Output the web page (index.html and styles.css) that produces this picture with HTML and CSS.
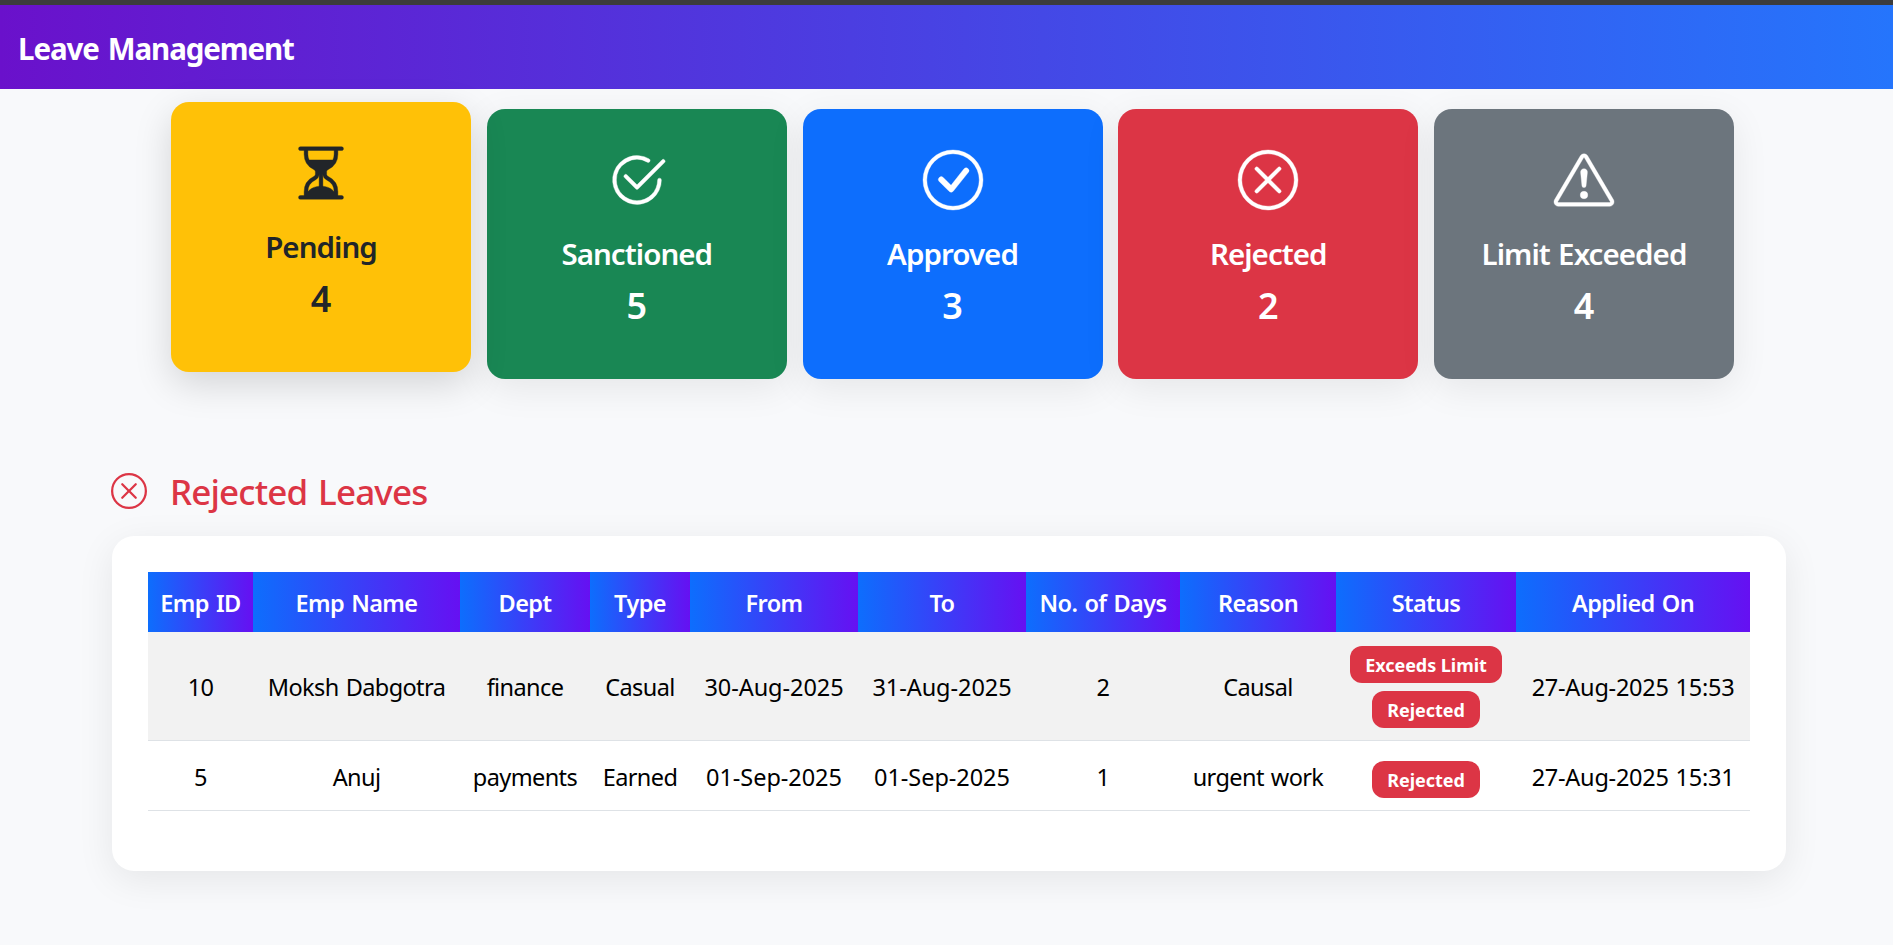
FILE: index.html
```html
<!DOCTYPE html>
<html lang="en">
<head>
<meta charset="utf-8">
<title>Leave Management</title>
<link rel="stylesheet" href="styles.css">
</head>
<body>
<header class="topbar"><h1 class="brand">Leave Management</h1></header>
<main>
<section class="cards">
  <div class="card pending">
    <svg class="card-icon" viewBox="0 0 16 16"><path d="M2.5 15a.5.5 0 1 1 0-1h1v-1a4.5 4.5 0 0 1 2.557-4.06c.29-.139.443-.377.443-.59v-.7c0-.213-.154-.451-.443-.59A4.5 4.5 0 0 1 3.5 3V2h-1a.5.5 0 0 1 0-1h11a.5.5 0 0 1 0 1h-1v1a4.5 4.5 0 0 1-2.557 4.06c-.29.139-.443.377-.443.59v.7c0 .213.154.451.443.59A4.5 4.5 0 0 1 12.5 13v1h1a.5.5 0 0 1 0 1zm2-13v1c0 .537.12 1.045.337 1.5h6.326c.216-.455.337-.963.337-1.5V2zm3 6.35c0 .701-.478 1.236-1.011 1.492A3.5 3.5 0 0 0 4.5 13s.866-1.299 3-1.48zm1 0v3.17c2.134.181 3 1.48 3 1.48a3.5 3.5 0 0 0-1.989-3.158C8.978 9.586 8.5 9.052 8.5 8.351z"/></svg>
    <h5 class="card-label">Pending</h5><div class="card-count">4</div>
  </div>
  <div class="card sanctioned">
    <svg class="card-icon" viewBox="0 0 16 16"><path d="M2.5 8a5.5 5.5 0 0 1 8.25-4.764.5.5 0 0 0 .5-.866A6.5 6.5 0 1 0 14.5 8a.5.5 0 0 0-1 0 5.5 5.5 0 1 1-11 0"/><path d="M15.354 3.354a.5.5 0 0 0-.708-.708L8 9.293 5.354 6.646a.5.5 0 1 0-.708.708l3 3a.5.5 0 0 0 .708 0z"/></svg>
    <h5 class="card-label">Sanctioned</h5><div class="card-count">5</div>
  </div>
  <div class="card approved">
    <svg class="card-icon" viewBox="0 0 16 16"><path d="M8 15A7 7 0 1 1 8 1a7 7 0 0 1 0 14m0 1A8 8 0 1 0 8 0a8 8 0 0 0 0 16"/><path d="m10.97 4.97-.02.022-3.473 4.425-2.093-2.094a.75.75 0 0 0-1.06 1.06L6.97 11.03a.75.75 0 0 0 1.079-.02l3.992-4.99a.75.75 0 0 0-1.071-1.05"/></svg>
    <h5 class="card-label">Approved</h5><div class="card-count">3</div>
  </div>
  <div class="card rejected">
    <svg class="card-icon" viewBox="0 0 16 16"><path d="M8 15A7 7 0 1 1 8 1a7 7 0 0 1 0 14m0 1A8 8 0 1 0 8 0a8 8 0 0 0 0 16"/><path d="M4.646 4.646a.5.5 0 0 1 .708 0L8 7.293l2.646-2.647a.5.5 0 0 1 .708.708L8.707 8l2.647 2.646a.5.5 0 0 1-.708.708L8 8.707l-2.646 2.647a.5.5 0 0 1-.708-.708L7.293 8 4.646 5.354a.5.5 0 0 1 0-.708"/></svg>
    <h5 class="card-label">Rejected</h5><div class="card-count">2</div>
  </div>
  <div class="card exceeded">
    <svg class="card-icon" viewBox="0 0 16 16"><path d="M7.938 2.016A.13.13 0 0 1 8.002 2a.13.13 0 0 1 .063.016.15.15 0 0 1 .054.057l6.857 11.667c.036.06.035.124.002.183a.2.2 0 0 1-.054.06.1.1 0 0 1-.066.017H1.146a.1.1 0 0 1-.066-.017.2.2 0 0 1-.054-.06.18.18 0 0 1 .002-.183L7.884 2.073a.15.15 0 0 1 .054-.057m1.044-.45a1.13 1.13 0 0 0-1.96 0L.165 13.233c-.457.778.091 1.767.98 1.767h13.713c.889 0 1.438-.99.98-1.767z"/><path d="M7.002 12a1 1 0 1 1 2 0 1 1 0 0 1-2 0M7.1 5.995a.905.905 0 1 1 1.8 0l-.35 3.507a.552.552 0 0 1-1.1 0z"/></svg>
    <h5 class="card-label">Limit Exceeded</h5><div class="card-count">4</div>
  </div>
</section>
<section class="leaves">
  <div class="leaves-head">
    <svg class="head-icon" viewBox="0 0 16 16"><path d="M8 15A7 7 0 1 1 8 1a7 7 0 0 1 0 14m0 1A8 8 0 1 0 8 0a8 8 0 0 0 0 16"/><path d="M4.646 4.646a.5.5 0 0 1 .708 0L8 7.293l2.646-2.647a.5.5 0 0 1 .708.708L8.707 8l2.647 2.646a.5.5 0 0 1-.708.708L8 8.707l-2.646 2.647a.5.5 0 0 1-.708-.708L7.293 8 4.646 5.354a.5.5 0 0 1 0-.708"/></svg>
    <h4 class="head-title">Rejected Leaves</h4>
  </div>
  <div class="panel">
    <table class="table">
      <colgroup><col class="c-id"><col class="c-name"><col class="c-dept"><col class="c-type"><col class="c-date"><col class="c-date"><col class="c-days"><col class="c-reason"><col class="c-status"><col class="c-applied"></colgroup>
      <thead><tr><th>Emp ID</th><th>Emp Name</th><th>Dept</th><th>Type</th><th>From</th><th>To</th><th>No. of Days</th><th>Reason</th><th>Status</th><th>Applied On</th></tr></thead>
      <tbody>
        <tr class="row-tall"><td>10</td><td>Moksh Dabgotra</td><td>finance</td><td>Casual</td><td class="date">30-Aug-2025</td><td class="date">31-Aug-2025</td><td>2</td><td>Causal</td><td class="status"><div class="badges"><span class="badge">Exceeds Limit</span><span class="badge">Rejected</span></div></td><td class="stamp">27-Aug-2025 15:53</td></tr>
        <tr class="row-short"><td>5</td><td>Anuj</td><td>payments</td><td>Earned</td><td class="date">01-Sep-2025</td><td class="date">01-Sep-2025</td><td>1</td><td>urgent work</td><td class="status"><div class="badges"><span class="badge">Rejected</span></div></td><td class="stamp">27-Aug-2025 15:31</td></tr>
      </tbody>
    </table>
  </div>
</section>
</main>
</body>
</html>
```
FILE: styles.css
```css
* { box-sizing: border-box; }
body { margin: 0; background: #f8f9fb; font-family: "Noto Sans", "Open Sans", sans-serif; color: #212529; height: 945px; overflow: hidden; }
h1, h4, h5 { margin: 0; }
.topbar { height: 89px; border-top: 5px solid #3c3c3c; background: linear-gradient(to right, #6a11cb, #2575fc); display: flex; align-items: center; padding: 3px 0 0 18px; }
.brand { font-size: 29.5px; font-weight: 700; line-height: 40px; letter-spacing: -1.1px; word-spacing: 2.5px; color: #fff; }
.cards { display: flex; justify-content: space-between; width: 1563px; margin: 20px 0 0 171px; }
.card { width: 300px; height: 270px; border-radius: 18px; padding-top: 41px; display: flex; flex-direction: column; align-items: center; color: #fff; box-shadow: 0 9px 37px rgba(0,0,0,.08); }
.pending { background: #ffc107; color: #212529; transform: translateY(-7px); box-shadow: 0 12px 37px rgba(0,0,0,.15); }
.sanctioned { background: #198754; }
.approved { background: #0d6efd; }
.rejected { background: #dc3545; }
.exceeded { background: #6c757d; }
.card-icon { width: 60px; height: 60px; fill: currentColor; stroke: currentColor; stroke-width: .1; overflow: visible; }
.card-label { margin-top: 26px; font-size: 29.5px; font-weight: 600; line-height: 36px; letter-spacing: -0.95px; word-spacing: 1.5px; }
.card-count { margin-top: 12px; font-size: 36px; font-weight: 600; line-height: 43px; }
.leaves { width: 1674px; margin: 91px 0 0 112px; }
.leaves-head { display: flex; align-items: center; gap: 23px; height: 43px; color: #dc3545; }
.head-icon { width: 36px; height: 36px; margin: 0 0 2px -1px; fill: currentColor; }
.head-title { font-size: 35px; font-weight: 500; line-height: 43px; letter-spacing: -0.85px; word-spacing: 2.5px; }
.panel { margin-top: 23px; height: 335px; padding: 36px; border-radius: 22px; background: #fff; box-shadow: 0 9px 37px rgba(0,0,0,.08); }
.table { width: 1602px; table-layout: fixed; border-collapse: separate; border-spacing: 0; font-size: 23.5px; text-align: center; color: #000; white-space: nowrap; }
.c-id { width: 105px; } .c-name { width: 207px; } .c-dept { width: 130px; } .c-type { width: 100px; } .c-date { width: 168px; } .c-days { width: 154px; } .c-reason { width: 156px; } .c-status { width: 180px; } .c-applied { width: 234px; }
.table th { height: 60px; padding: 2px 0 0; color: #fff; font-weight: 600; line-height: 36px; letter-spacing: -0.6px; word-spacing: 1.5px; background: linear-gradient(to right, #0d6efd, #6610f2); }
.table td { padding: 2px 0 0; line-height: 36px; letter-spacing: -0.6px; word-spacing: 1.5px; border-bottom: 1px solid #dee2e6; vertical-align: middle; }
.table .date { letter-spacing: -0.05px; }
.table .stamp { letter-spacing: -0.25px; word-spacing: 1px; }
.row-tall td { height: 109px; background: #f2f2f2; }
.row-short td { height: 70px; }
.row-short .status { padding-top: 7px; }
.badges { display: flex; flex-direction: column; align-items: center; gap: 8px; }
.badge { height: 37px; padding: 1px 15px 0; border-radius: 12px; background: #dc3545; color: #fff; font-size: 18px; font-weight: 700; line-height: 36px; letter-spacing: -0.05px; word-spacing: 0; }
```
